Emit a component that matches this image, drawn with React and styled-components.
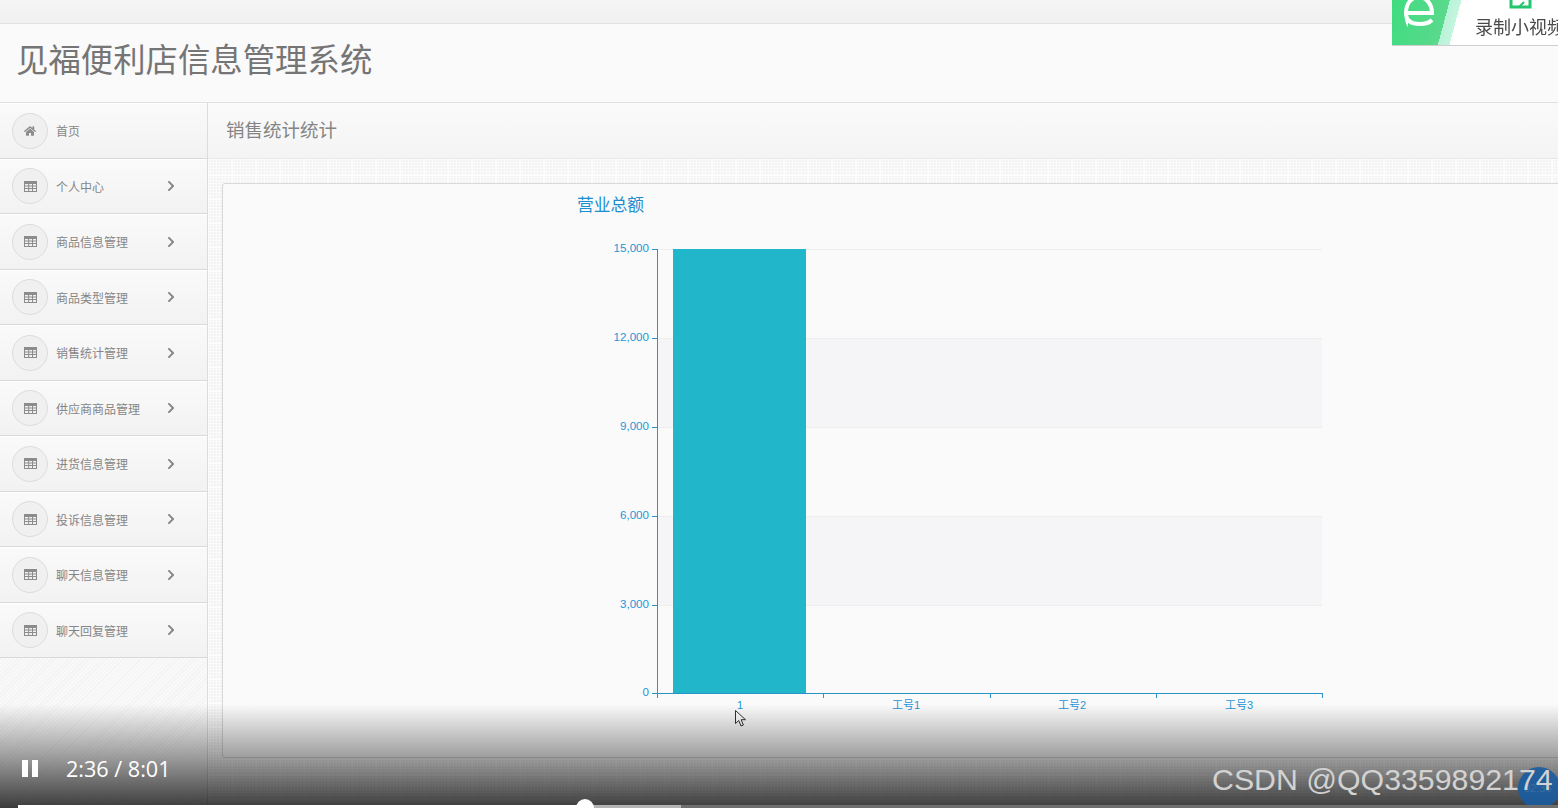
import React from 'react';
import styled, {createGlobalStyle} from 'styled-components';
import {FaHome, FaChevronRight} from 'react-icons/fa';

const GlobalStyle = createGlobalStyle`
  html, body {
    margin: 0;
    padding: 0;
    background: #f7f7f8;
    overflow: hidden;
  }
  body {
    font-family: "Liberation Sans", "Noto Sans CJK SC", sans-serif;
  }
`;

const Page = styled.div`
  position: relative;
  width: 1558px;
  height: 808px;
  overflow: hidden;
  display: flex;
  flex-direction: column;
  filter: blur(0.4px);
`;

const TopStrip = styled.div`
  height: 23px;
  flex: none;
  background: linear-gradient(#f5f5f6, #f0f0f1);
  border-bottom: 1px solid #e2e2e3;
`;

const Header = styled.header`
  height: 78px;
  flex: none;
  display: flex;
  align-items: center;
  padding-left: 16px;
  background: #fafafa;
  border-bottom: 1px solid #e0e0e1;
`;

const Title = styled.h1`
  margin: 0 0 12px;
  font-size: 32.4px;
  font-weight: 400;
  color: #757575;
`;

const Body = styled.div`
  flex: 1;
  display: flex;
  min-height: 0;
`;

const Sidebar = styled.nav`
  width: 207px;
  flex: none;
  border-right: 1px solid #dcdcdd;
  background: repeating-linear-gradient(135deg, #f3f3f4 0 1px, #f9f9f9 1px 3px);
`;

const NavItem = styled.div`
  height: 55.5px;
  box-sizing: border-box;
  padding: 1px 0 0 12px;
  display: flex;
  align-items: center;
  border-bottom: 1px solid #d9d9da;
  box-shadow: inset 0 1px 0 #fff;
  background: linear-gradient(#fafafa, #f2f2f3);
`;

const IconCircle = styled.span`
  width: 34px;
  height: 34px;
  flex: none;
  display: flex;
  align-items: center;
  justify-content: center;
  border: 1px solid #dcdcdc;
  border-radius: 50%;
  background: #f0f0f0;
  color: #8c8c8c;
`;

const NavLabel = styled.span`
  flex: none;
  width: 109px;
  margin-left: 8px;
  font-size: 12px;
  color: #868686;
`;

const Chevron = styled.span`
  display: flex;
  color: #858585;
  font-size: 12px;
`;

const Main = styled.main`
  flex: 1;
  min-width: 0;
  background-color: #fbfbfb;
  background-image:
    linear-gradient(#fdfdfd 1px, transparent 1px),
    linear-gradient(90deg, #fdfdfd 1px, transparent 1px),
    radial-gradient(circle at 1px 1px, #f2f2f3 1px, transparent 1px);
  background-size: 24px 24px, 24px 24px, 3px 3px;
`;

const Breadcrumb = styled.div`
  height: 56px;
  box-sizing: border-box;
  display: flex;
  align-items: center;
  padding: 0 0 3px 18px;
  border-bottom: 1px solid #e8e8e9;
  background: linear-gradient(#fafafa, #f4f4f5);
  font-size: 18.5px;
  color: #858585;
`;

const Panel = styled.section`
  width: 1400px;
  height: 575px;
  box-sizing: border-box;
  margin: 24px 0 0 14px;
  padding: 6px 0 0 347px;
  border: 1px solid #d8d8d9;
  border-radius: 3px;
  background: #fafafa;
`;

const Chart = styled.svg`
  display: block;
  width: 780px;
  height: 530px;
  font-family: "Liberation Sans", "Noto Sans CJK SC", sans-serif;
`;

const AxisText = styled.text`
  font-size: ${(props) => props.$size || 11}px;
  fill: #1e96d8;
`;

const ChartTitle = styled.text`
  font-size: 16.8px;
  fill: #1b8fd0;
`;

const RecordWidget = styled.div`
  position: absolute;
  top: 0;
  right: 0;
  width: 166px;
  height: 45px;
  overflow: hidden;
  border-bottom: 1px solid #cfcfcf;
  background: linear-gradient(105deg, #3fdc80 0, #5ad98c 32.5%, #b8f3d8 32.5%, #c4f5df 39%, #fff 39%);
`;

const RecordLogo = styled.svg`
  position: absolute;
  left: 11px;
  top: 0;
  width: 34px;
  height: 30px;
`;

const RecordIcon = styled.svg`
  position: absolute;
  left: 116px;
  top: 0;
  width: 28px;
  height: 9px;
`;

const RecordLabel = styled.span`
  position: absolute;
  left: 83px;
  top: 17px;
  font-size: 18px;
  line-height: 22px;
  white-space: nowrap;
  color: #4a4a4a;
`;

const Cursor = styled.svg`
  position: absolute;
  left: 734px;
  top: 709px;
  width: 14px;
  height: 19px;
`;

const Shade = styled.div`
  position: absolute;
  left: 0;
  right: 0;
  bottom: 0;
  height: 104px;
  background: linear-gradient(rgba(0, 0, 0, 0), rgba(0, 0, 0, 0.36) 50%, rgba(0, 0, 0, 0.76));
`;

const PauseIcon = styled.span`
  position: absolute;
  left: 22px;
  top: 760px;
  width: 6px;
  height: 17px;
  background: #fff;
  box-shadow: 10px 0 0 #fff;
`;

const TimeText = styled.span`
  position: absolute;
  left: 66px;
  top: 756px;
  font-size: 21.6px;
  line-height: 26px;
  color: #fff;
  font-family: "Open Sans", sans-serif;
`;

const Watermark = styled.span`
  position: absolute;
  left: 1212px;
  top: 763px;
  font-size: 30.3px;
  line-height: 34px;
  white-space: nowrap;
  color: #d2d2d2;
`;

const Badge = styled.span`
  position: absolute;
  left: 1518px;
  top: 767px;
  width: 42px;
  height: 42px;
  display: flex;
  align-items: center;
  padding-left: 6px;
  box-sizing: border-box;
  border-radius: 50%;
  background: rgba(26, 92, 160, 0.9);
  font-size: 11px;
  color: #3d6f9f;
  white-space: nowrap;
`;

const Track = styled.div`
  position: absolute;
  left: 18px;
  right: 0;
  top: 805px;
  height: 3px;
  background: #6e6e6e;
`;

const Buffered = styled.div`
  position: absolute;
  left: 0;
  top: 0;
  height: 100%;
  background: #b4b4b4;
`;

const Played = styled(Buffered)`
  background: #fff;
`;

const Thumb = styled.span`
  position: absolute;
  left: 576px;
  top: 799px;
  width: 18px;
  height: 18px;
  border-radius: 50%;
  background: #fff;
`;

const TableIcon = () => (
  <svg width="13" height="11" viewBox="0 0 13 11" fill="currentColor">
    <path d="M0 0h13v11H0zM1 3v1.6h3.2V3zm4.2 0v1.6h2.8V3zM9 3v1.6h3V3zM1 5.5v1.6h3.2V5.5zm4.2 0v1.6h2.8V5.5zM9 5.5v1.6h3V5.5zM1 8v2h3.2V8zm4.2 0v2h2.8V8zM9 8v2h3V8z" fillRule="evenodd" />
  </svg>
);

const menuItems = ['个人中心', '商品信息管理', '商品类型管理', '销售统计管理', '供应商商品管理', '进货信息管理', '投诉信息管理', '聊天信息管理', '聊天回复管理'];

const yTicks = [
  {label: '15,000', y: 249},
  {label: '12,000', y: 338},
  {label: '9,000', y: 427},
  {label: '6,000', y: 516},
  {label: '3,000', y: 605},
  {label: '0', y: 693},
];

const xLabels = [
  {label: '1', x: 740},
  {label: '工号1', x: 906},
  {label: '工号2', x: 1072},
  {label: '工号3', x: 1239},
];

const SalesChart = () => (
  <Chart viewBox="570 190 780 530">
    <ChartTitle x="577" y="211">营业总额</ChartTitle>
    <rect x="657" y="338" width="665" height="89" fill="#f5f5f7" />
    <rect x="657" y="516" width="665" height="89" fill="#f5f5f7" />
    {yTicks.map((t) => (
      <line key={t.y} x1="657" x2="1322" y1={t.y + 0.5} y2={t.y + 0.5} stroke="#eeeeef" />
    ))}
    <rect x="673" y="249" width="133" height="444" fill="#22b6cb" />
    <line x1="657.5" x2="657.5" y1="249" y2="693" stroke="#2a93c9" />
    <line x1="657" x2="1323" y1="693.5" y2="693.5" stroke="#2a93c9" />
    {yTicks.map((t) => (
      <g key={t.label}>
        <line x1="652" x2="657" y1={t.y + 0.5} y2={t.y + 0.5} stroke="#2a93c9" />
        <AxisText $size={11.6} x="649" y={t.y + 3} textAnchor="end">{t.label}</AxisText>
      </g>
    ))}
    {[657, 823, 990, 1156, 1322].map((x) => (
      <line key={x} x1={x + 0.5} x2={x + 0.5} y1="693" y2="698" stroke="#2a93c9" />
    ))}
    {xLabels.map((t) => (
      <AxisText key={t.x} x={t.x} y="709" textAnchor="middle">{t.label}</AxisText>
    ))}
  </Chart>
);

const App = () => (
  <Page>
    <GlobalStyle />
    <TopStrip />
    <Header>
      <Title>见福便利店信息管理系统</Title>
    </Header>
    <Body>
      <Sidebar>
        <NavItem>
          <IconCircle><FaHome size={12} /></IconCircle>
          <NavLabel>首页</NavLabel>
        </NavItem>
        {menuItems.map((name) => (
          <NavItem key={name}>
            <IconCircle><TableIcon /></IconCircle>
            <NavLabel>{name}</NavLabel>
            <Chevron><FaChevronRight /></Chevron>
          </NavItem>
        ))}
      </Sidebar>
      <Main>
        <Breadcrumb>销售统计统计</Breadcrumb>
        <Panel>
          <SalesChart />
        </Panel>
      </Main>
    </Body>

    <RecordWidget>
      <RecordLogo viewBox="0 0 34 30">
        <path d="M2 13h27C29 4 23 -3 16 -3 8 -3 3 4 3 13c0 8 6 11 14 11 5 0 9-1 12-4" fill="none" stroke="#fff" strokeWidth="4" />
        <path d="M2 17c0 4 1 8 3 10 0-3 0-6 1-8z" fill="#fff" />
      </RecordLogo>
      <RecordIcon viewBox="0 0 28 9">
        <path d="M3 0v7h19V0" fill="none" stroke="#22c66e" strokeWidth="3" />
        <path d="M11 7l5-5" fill="none" stroke="#22c66e" strokeWidth="2" />
      </RecordIcon>
      <RecordLabel>录制小视频</RecordLabel>
    </RecordWidget>

    <Cursor viewBox="0 0 14 19">
      <path d="M1.5 1.5v13l3.2-3 2.3 5.5 2.4-1-2.3-5.3h4.4z" fill="#fff" stroke="#333" strokeWidth="1" />
    </Cursor>

    <Shade />
    <PauseIcon />
    <TimeText>2:36 / 8:01</TimeText>
    <Badge>02:36</Badge>
    <Watermark>CSDN @QQ3359892174</Watermark>
    <Track>
      <Buffered style={{width: 663}} />
      <Played style={{width: 567}} />
    </Track>
    <Thumb />
  </Page>
);

export default App;
